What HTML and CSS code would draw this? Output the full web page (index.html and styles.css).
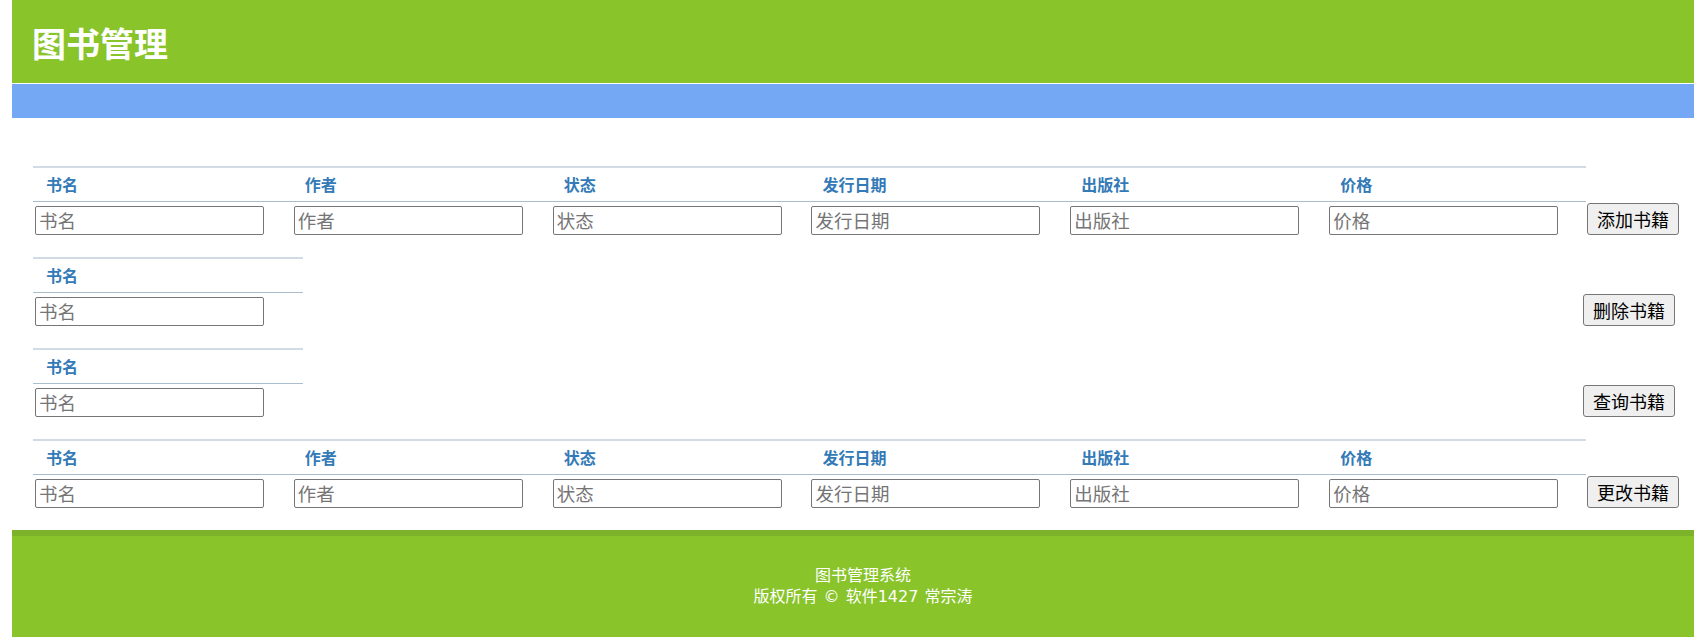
FILE: index.html
```html
<!DOCTYPE html>
<html lang="zh-CN">
<head>
<meta charset="utf-8">
<title>图书管理</title>
<link rel="stylesheet" href="styles.css">
</head>
<body>
<div class="page">
  <header class="masthead">
    <h1 class="title">图书管理</h1>
  </header>
  <div class="navbar"></div>

  <main class="content">
    <form class="section">
      <div class="fields">
        <div class="field"><div class="field-head">书名</div><div class="field-body"><input type="text" placeholder="书名"></div></div>
        <div class="field"><div class="field-head">作者</div><div class="field-body"><input type="text" placeholder="作者"></div></div>
        <div class="field"><div class="field-head">状态</div><div class="field-body"><input type="text" placeholder="状态"></div></div>
        <div class="field"><div class="field-head">发行日期</div><div class="field-body"><input type="text" placeholder="发行日期"></div></div>
        <div class="field"><div class="field-head">出版社</div><div class="field-body"><input type="text" placeholder="出版社"></div></div>
        <div class="field"><div class="field-head">价格</div><div class="field-body"><input type="text" placeholder="价格"></div></div>
      </div>
      <div class="action"><div class="action-spacer"></div><div class="action-body"><button type="button">添加书籍</button></div></div>
    </form>

    <form class="section section-single">
      <div class="fields">
        <div class="field"><div class="field-head">书名</div><div class="field-body"><input type="text" placeholder="书名"></div></div>
      </div>
      <div class="action"><div class="action-spacer"></div><div class="action-body"><button type="button">删除书籍</button></div></div>
    </form>

    <form class="section section-single">
      <div class="fields">
        <div class="field"><div class="field-head">书名</div><div class="field-body"><input type="text" placeholder="书名"></div></div>
      </div>
      <div class="action"><div class="action-spacer"></div><div class="action-body"><button type="button">查询书籍</button></div></div>
    </form>

    <form class="section">
      <div class="fields">
        <div class="field"><div class="field-head">书名</div><div class="field-body"><input type="text" placeholder="书名"></div></div>
        <div class="field"><div class="field-head">作者</div><div class="field-body"><input type="text" placeholder="作者"></div></div>
        <div class="field"><div class="field-head">状态</div><div class="field-body"><input type="text" placeholder="状态"></div></div>
        <div class="field"><div class="field-head">发行日期</div><div class="field-body"><input type="text" placeholder="发行日期"></div></div>
        <div class="field"><div class="field-head">出版社</div><div class="field-body"><input type="text" placeholder="出版社"></div></div>
        <div class="field"><div class="field-head">价格</div><div class="field-body"><input type="text" placeholder="价格"></div></div>
      </div>
      <div class="action"><div class="action-spacer"></div><div class="action-body"><button type="button">更改书籍</button></div></div>
    </form>
  </main>

  <footer class="footer">
    <div class="footer-text">
      <div>图书管理系统</div>
      <div>版权所有 © 软件1427 常宗涛</div>
    </div>
  </footer>
</div>
</body>
</html>
```

FILE: styles.css
```css
html, body {
  margin: 0;
  padding: 0;
  background: #ffffff;
  overflow: hidden;
}

body {
  font-family: "Noto Sans CJK SC", "Noto Sans", "Liberation Sans", sans-serif;
  color: #000;
}

.page {
  margin-left: 12px;
}

.masthead {
  height: 83px;
  background: #88c42a;
  border-bottom: 1px solid #ffffff;
  display: flex;
  align-items: center;
  padding-left: 20px;
}

.title {
  margin: 0;
  padding-top: 2px;
  font-size: 34px;
  font-weight: bold;
  color: #ffffff;
  line-height: 1;
}

.navbar {
  height: 34px;
  background: #75a8f4;
}

.content {
  padding-top: 48px;
}

.section {
  display: flex;
  margin: 0 0 19px 21px;
}

.fields {
  display: flex;
  width: 1553px;
}

.section-single .fields {
  width: 1549px;
}

.field {
  flex: 1 1 0;
}

.section-single .field {
  flex: 0 0 270px;
}

.field-head {
  height: 33px;
  border-top: 2px solid #d2dbe5;
  border-bottom: 1px solid #aabdcc;
  padding-left: 13px;
  font-size: 16px;
  font-weight: bold;
  color: #337ab7;
  line-height: 33px;
}

.field-body {
  height: 36px;
  display: flex;
  align-items: center;
  padding-left: 2px;
}

.field-body input {
  width: 229px;
  height: 29px;
  box-sizing: border-box;
  border: 1px solid #767676;
  border-radius: 2px;
  padding: 0 3px;
  font-family: "Noto Sans CJK SC", "Noto Sans", sans-serif;
  font-size: 18.5px;
  color: #000;
  background: #fff;
}

.field-body input::placeholder {
  color: #757575;
}

.action {
  display: flex;
  flex-direction: column;
  padding-left: 1px;
}

.action-spacer {
  height: 34px;
}

.action-body {
  height: 38px;
  display: flex;
  align-items: center;
}

.action button {
  height: 32px;
  padding: 0 9px;
  font-family: "Noto Sans CJK SC", "Noto Sans", sans-serif;
  font-size: 18px;
  line-height: 1;
  color: #000;
  background: #efefef;
  border: 1px solid #767676;
  border-radius: 3px;
}

.footer {
  background: #88c42a;
  border-top: 6px solid #7db32a;
  padding: 29px 0 60px;
}

.footer-text {
  padding-left: 20px;
  text-align: center;
  color: #ffffff;
  font-family: "DejaVu Sans", "Noto Sans CJK SC", sans-serif;
  font-size: 16px;
  line-height: 21px;
  word-spacing: 1px;
}
```
